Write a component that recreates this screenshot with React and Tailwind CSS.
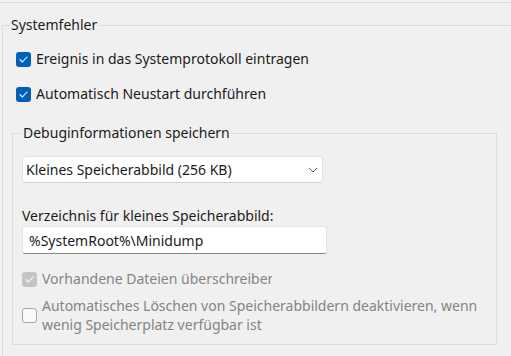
import React from "react";

function Check({ checked, disabled }) {
  if (checked) {
    return (
      <span
        className={
          "flex h-[15px] w-[15px] shrink-0 items-center justify-center rounded-[3px] " +
          (disabled ? "bg-[#c4c4c4]" : "bg-[#005fb8]")
        }
      >
        <svg width="9" height="7" viewBox="0 0 9 7" fill="none">
          <path d="M1 3.6 L3.4 6 L8 1" stroke="#ffffff" strokeWidth="1.1" strokeLinecap="round" strokeLinejoin="round" />
        </svg>
      </span>
    );
  }
  return (
    <span className="h-[15px] w-[15px] shrink-0 rounded-[3px] border border-[#a8a8a8] bg-[#f9f9f9]" />
  );
}

export default function App() {
  return (
    <div
      className="relative h-[356px] w-[511px] overflow-hidden bg-[#f0f0f0] text-[14px] text-[#1b1b1b]"
      style={{ fontFamily: '"Segoe UI", "Noto Sans", sans-serif' }}
    >
      <div className="h-[3px] border-b border-[#dadada]" />
      <fieldset className="ml-[2px] mt-[12px] w-[560px] h-[400px] border border-[#dcdcdc] pl-[13px]">
        <legend className="-ml-[6px] px-[1px] leading-[20px]">Systemfehler</legend>
        <div className="mt-[14px] flex items-center gap-[5px] leading-[20px]">
          <Check checked />
          <span>Ereignis in das Systemprotokoll eintragen</span>
        </div>
        <div className="mt-[15px] flex items-center gap-[5px] leading-[20px]">
          <Check checked />
          <span>Automatisch Neustart durchführen</span>
        </div>
        <fieldset className="-ml-[4px] mt-[19px] h-[222px] w-[485px] border border-[#dcdcdc] pl-[9px]">
          <legend className="ml-0 px-[1px] leading-[20px]">Debuginformationen speichern</legend>
          <div className="mt-[13px] flex h-[27px] w-[301px] items-center justify-between rounded-[4px] border border-[#e2e2e2] border-b-[#cfcfcf] bg-white pl-[3px] pr-[4px]">
            <span>Kleines Speicherabbild (256 KB)</span>
            <svg width="10" height="6" viewBox="0 0 10 6" fill="none">
              <path d="M1 1 L5 5 L9 1" stroke="#5a5a5a" strokeWidth="1" />
            </svg>
          </div>
          <div className="mt-[23px] leading-[20px]">Verzeichnis für kleines Speicherabbild:</div>
          <div className="mt-0 flex h-[28px] w-[305px] items-center rounded-[3px] border border-[#e5e5e5] border-b-[#8a8a8a] bg-white pl-[6px]">
            %SystemRoot%\Minidump
          </div>
          <div className="mt-[15px] flex items-center gap-[5px] leading-[20px] text-[#848484]">
            <Check checked disabled />
            <span className="w-[230px] overflow-hidden whitespace-nowrap">Vorhandene Dateien überschreiben</span>
          </div>
          <div className="mt-[7px] flex items-center gap-[5px] leading-[19px] text-[#848484]">
            <Check />
            <span>
              Automatisches Löschen von Speicherabbildern deaktivieren, wenn
              <br />
              wenig Speicherplatz verfügbar ist
            </span>
          </div>
        </fieldset>
      </fieldset>
    </div>
  );
}
